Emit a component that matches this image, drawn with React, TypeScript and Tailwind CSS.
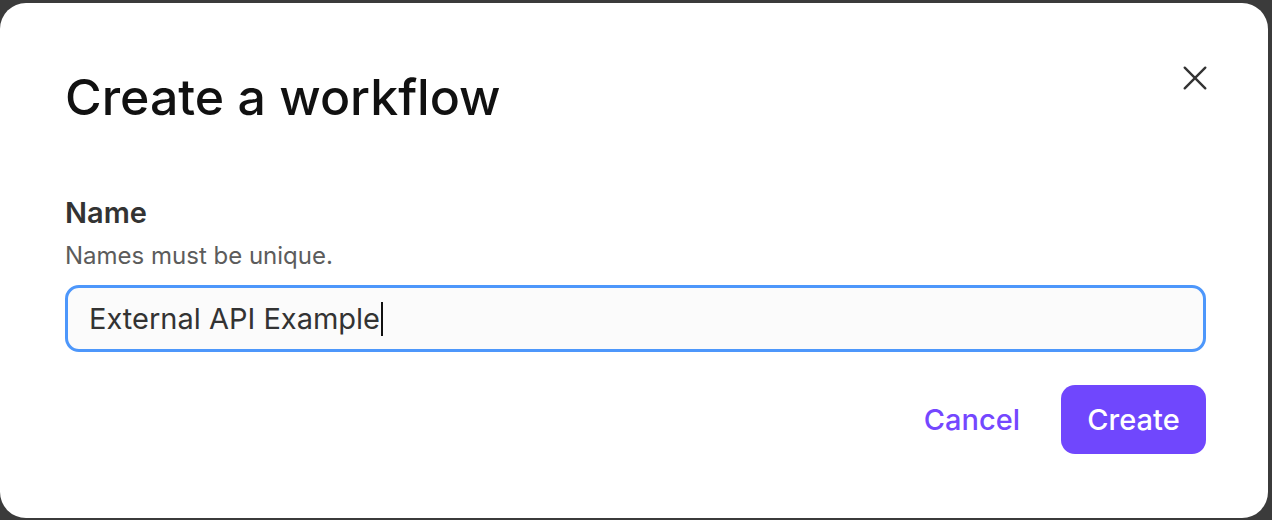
import React from "react";

export default function App() {
  return (
    <div className="w-[1272px] h-[520px] bg-[#3b3b3b] pt-[3px] pr-[4px] pb-[2px] overflow-hidden" style={{ fontFamily: "Inter, 'Noto Sans', sans-serif" }}>
      <div className="w-[1268px] h-[515px] bg-white rounded-[26px] pl-[65px] pr-[62px] pt-[66px] flex flex-col">
        <div className="flex items-start justify-between">
          <h1 className="text-[50px] leading-[56px] font-medium text-[#111]">Create a workflow</h1>
          <button className="mt-[-9px] mr-[-7px] w-[36px] h-[36px] flex items-center justify-center text-[#333]">
            <svg width="26" height="26" viewBox="0 0 24 24" fill="none" stroke="currentColor" strokeWidth="2.2" strokeLinecap="round">
              <path d="M2.5 2.5L21.5 21.5M21.5 2.5L2.5 21.5" />
            </svg>
          </button>
        </div>
        <div className="mt-[71px] text-[29px] leading-[34px] font-semibold text-[#333]">Name</div>
        <div className="mt-[12px] text-[24px] leading-[28px] text-[#5c5c5c]">Names must be unique.</div>
        <div className="mt-[15px] h-[67px] rounded-[14px] border-[3px] border-[#4d97fb] bg-[#fbfbfb] flex items-center pl-[21px] text-[29px] text-[#333]">
          <span>External API Example</span>
          <span className="w-[2px] h-[34px] bg-[#111] ml-[1px]" />
        </div>
        <div className="mt-[33px] flex items-center justify-end gap-[41px]">
          <button className="text-[29px] text-[#7447ff] font-medium">Cancel</button>
          <button className="w-[145px] h-[69px] rounded-[14px] bg-[#7047fd] text-white text-[29px] font-medium">Create</button>
        </div>
      </div>
    </div>
  );
}
